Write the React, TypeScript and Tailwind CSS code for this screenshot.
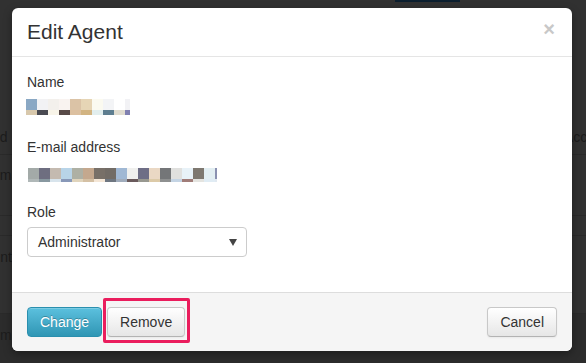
import React from "react";

const nameTop = [
  "bg-[#8aa8c4]", "bg-[#f2f2f4]", "bg-[#f3f0ec]", "bg-[#f9f3f0]", "bg-[#dbc3a6]",
  "bg-[#e6d5b5]", "bg-[#fbfaf0]", "bg-[#f3f4f6]", "bg-[#ffffff]", "bg-[#f2f2f5]",
];
const nameBottom = [
  "bg-[#d8c8ac]", "bg-[#4a4a52]", "bg-[#f8f4e8]", "bg-[#584a48]", "bg-[#dcc0a0]",
  "bg-[#d2b482]", "bg-[#e2eeee]", "bg-[#5e7e90]", "bg-[#e0dccf]", "bg-[#8080b0]",
];
const nameWidths = ["w-[11px]", "w-[11px]", "w-[11px]", "w-[11px]", "w-[11px]", "w-[11px]", "w-[11px]", "w-[11px]", "w-[11px]", "w-[5px]"];

const mailTop = [
  "bg-[#a3aaa8]", "bg-[#6e6e80]", "bg-[#c4bab0]", "bg-[#b8d4e8]", "bg-[#aeb0a4]", "bg-[#c4a88e]",
  "bg-[#787068]", "bg-[#726c66]", "bg-[#a0b8d4]", "bg-[#f0f0ee]", "bg-[#6e6e86]", "bg-[#ead8c4]",
  "bg-[#747678]", "bg-[#e0e0de]", "bg-[#e8f2f8]", "bg-[#7e7870]", "bg-[#e2eef2]", "bg-[#8a90b0]",
];
const mailBottom = [
  "bg-[#b0b8b8]", "bg-[#8898a0]", "bg-[#d8e4ec]", "bg-[#8898b8]", "bg-[#e0d4bc]", "bg-[#d4c0a4]",
  "bg-[#f4e6d6]", "bg-[#6e7680]", "bg-[#a0acbc]", "bg-[#6a5a5c]", "bg-[#989890]", "bg-[#dccaa8]",
  "bg-[#8e9090]", "bg-[#c4d4e4]", "bg-[#a07c78]", "bg-[#e4e4e0]", "bg-[#e0ecf4]", "bg-[#e0e8f0]",
];

function Pixels({ top, bottom, widths, topH, bottomH }: { top: string[]; bottom: string[]; widths: string[]; topH: string; bottomH: string }) {
  return (
    <div className="flex flex-col">
      <div className="flex">
        {top.map((c, i) => (
          <div key={i} className={`${c} ${widths[i]} ${topH}`} />
        ))}
      </div>
      <div className="flex">
        {bottom.map((c, i) => (
          <div key={i} className={`${c} ${widths[i]} ${bottomH}`} />
        ))}
      </div>
    </div>
  );
}

const mailWidths = [
  "w-[11px]", "w-[11px]", "w-[11px]", "w-[11px]", "w-[11px]", "w-[11px]", "w-[11px]", "w-[11px]", "w-[11px]",
  "w-[11px]", "w-[11px]", "w-[11px]", "w-[11px]", "w-[11px]", "w-[11px]", "w-[11px]", "w-[11px]", "w-[2px]",
];

export default function App() {
  return (
    <div className="relative w-[586px] h-[363px] overflow-hidden bg-[#313131] text-[14px] text-[#1c1c1c] [font-family:'Liberation_Sans',Arial,sans-serif]">
      {/* page behind the backdrop */}
      <div className="flex flex-col">
        <div className="h-[2px] ml-[395px] w-[65px] bg-[#0b1e2e]" />
        <div className="h-[118px]" />
        <div className="h-[35px] border-b border-[#2a2a2a] flex items-center justify-between">
          <span className="-ml-[33px] whitespace-nowrap">Added</span>
          <span className="whitespace-nowrap w-[22px] overflow-hidden">Account</span>
        </div>
        <div className="h-[61px] border-b border-[#2a2a2a] pt-[10px]">
          <span className="-ml-[8px] whitespace-nowrap inline-block">email</span>
        </div>
        <div className="h-[20px] border-b border-[#2a2a2a]" />
        <div className="h-[77px] pt-[11px]">
          <span className="-ml-[27px] whitespace-nowrap inline-block">recently</span>
        </div>
        <div className="h-[50px] bg-[#2c2c2c] pt-[11px] border-t border-[#2a2a2a]">
          <span className="-ml-[17px] whitespace-nowrap inline-block">Admin</span>
        </div>
      </div>

      {/* modal */}
      <div className="absolute left-[12px] top-[8px] w-[560px] bg-white rounded-[6px] shadow-[0_3px_8px_rgba(0,0,0,0.35)] text-[#333]">
        <div className="h-[49px] px-[15px] flex justify-between border-b border-[#e5e5e5]">
          <h3 className="self-center text-[21px] font-normal leading-[24px]">Edit Agent</h3>
          <span className="mt-[11px] mr-[2px] text-[20px] font-bold leading-[20px] text-[#c8c8c8]">×</span>
        </div>
        <div className="px-[15px] pt-[15px] pb-[15px] flex flex-col items-start">
          <div className="leading-[20px] mb-[7px]">Name</div>
          <div className="-ml-[1px]">
            <Pixels top={nameTop} bottom={nameBottom} widths={nameWidths} topH="h-[11px]" bottomH="h-[5px]" />
          </div>
          <div className="leading-[20px] mt-[22px] mb-[11px]">E-mail address</div>
          <div className="ml-[1px]">
            <Pixels top={mailTop} bottom={mailBottom} widths={mailWidths} topH="h-[11px]" bottomH="h-[3px]" />
          </div>
          <div className="leading-[20px] mt-[20px] mb-[5px]">Role</div>
          <div className="w-[220px] h-[30px] mb-[20px] border border-[#cccccc] rounded-[4px] bg-white pl-[10px] pr-[9px] flex items-center justify-between">
            <span>Administrator</span>
            <svg width="8" height="7" viewBox="0 0 8 7" className="mt-[1px]">
              <polygon points="0,0 8,0 4,7" fill="#444" />
            </svg>
          </div>
        </div>
        <div className="bg-[#f5f5f5] border-t border-[#dddddd] rounded-b-[6px] px-[15px] pt-[14px] pb-[14px] flex items-center">
          <button className="h-[30px] px-[12px] rounded-[4px] border border-[#2a8fae] bg-linear-to-b from-[#5bc0de] to-[#2f96b4] text-white text-[14px] [text-shadow:0_-1px_0_rgba(0,0,0,0.25)] shadow-[inset_0_1px_0_rgba(255,255,255,0.2)]">
            Change
          </button>
          <div className="relative ml-[5px]">
            <button className="h-[30px] px-[12px] rounded-[4px] border border-[#c8c8c8] border-b-[#b3b3b3] bg-linear-to-b from-white to-[#e6e6e6] text-[#333] text-[14px] shadow-[inset_0_1px_0_rgba(255,255,255,0.2),0_1px_2px_rgba(0,0,0,0.05)]">
              Remove
            </button>
            <span className="absolute -left-[4px] -top-[9px] -right-[5px] -bottom-[6px] border-[3px] border-[#ea1d5d] rounded-[2px]" />
          </div>
          <button className="ml-auto h-[30px] px-[12px] rounded-[4px] border border-[#c8c8c8] border-b-[#b3b3b3] bg-linear-to-b from-white to-[#e6e6e6] text-[#333] text-[14px] shadow-[inset_0_1px_0_rgba(255,255,255,0.2),0_1px_2px_rgba(0,0,0,0.05)]">
            Cancel
          </button>
        </div>
      </div>
    </div>
  );
}
